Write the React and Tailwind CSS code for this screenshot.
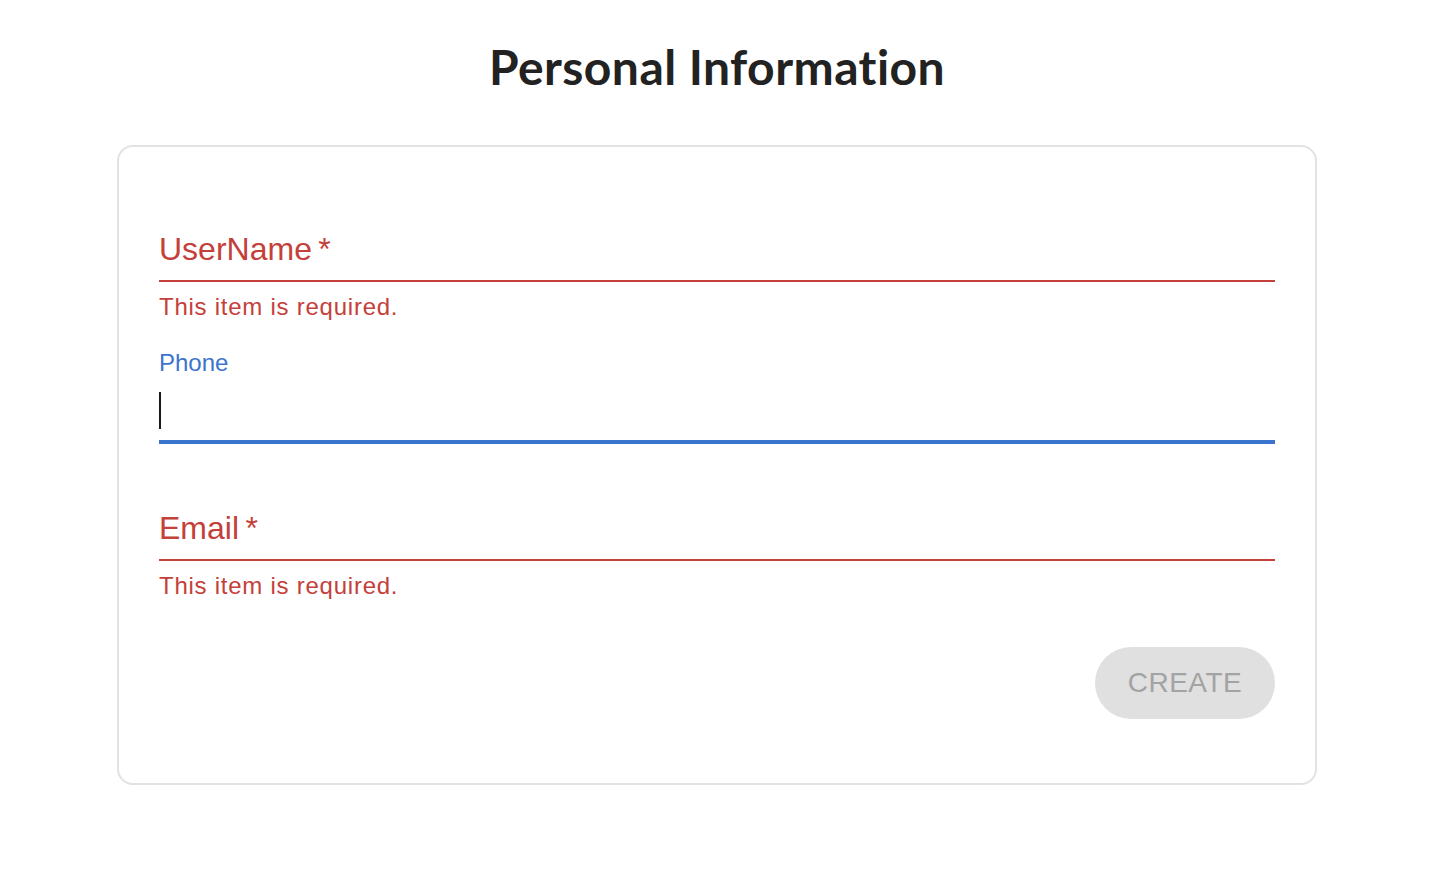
import React from 'react';

const RED = 'text-[#c4403a]';

const ErrorField = ({ label }) => (
    <div className="flex flex-col">
        <div className="h-[96px] pt-[32px] flex flex-col">
            <div className="h-[64px] pt-[8px] border-b-2 border-[#c4403a]">
                <div className={`${RED} text-[32px] leading-[46px]`}>
                    {label}{'\u2009*'}
                </div>
            </div>
        </div>
        <p className={`${RED} mt-[5px] text-[24px] leading-[40px] tracking-[0.75px]`}>
            This item is required.
        </p>
    </div>
);

const FocusedField = ({ label }) => (
    <div className="h-[96px] flex flex-col">
        <div className="h-[32px] text-[24px] leading-[30px] text-[#3b74cd]">
            {label}
        </div>
        <div className="h-[64px] pt-[12px] border-b-4 border-[#3b74cd]">
            <div className="w-[2px] h-[37px] bg-[#1a1a1a]" />
        </div>
    </div>
);

export default function App() {
    return (
        <div
            className="w-[1434px] pt-[38px] flex flex-col items-center bg-white"
            style={{ fontFamily: '"Liberation Sans", Arial, sans-serif' }}
        >
            <h1
                className="text-[48px] leading-[58px] font-bold tracking-[0.45px] text-[#222222] mb-[49px]"
                style={{ fontFamily: 'Lato, sans-serif' }}
            >
                Personal Information
            </h1>
            <div className="w-[1200px] border-2 border-[#e2e2e2] rounded-[16px] px-[40px] pt-[39px] pb-[64px] flex flex-col">
                <div className="flex flex-col gap-[21px]">
                    <ErrorField label="UserName" />
                    <FocusedField label="Phone" />
                    <ErrorField label="Email" />
                </div>
                <div className="flex justify-end mt-[41px]">
                    <button
                        disabled
                        className="w-[180px] h-[72px] rounded-full bg-[#e0e0e0] text-[#a3a3a3] text-[28px] tracking-[0.5px]"
                    >
                        CREATE
                    </button>
                </div>
            </div>
        </div>
    );
}
